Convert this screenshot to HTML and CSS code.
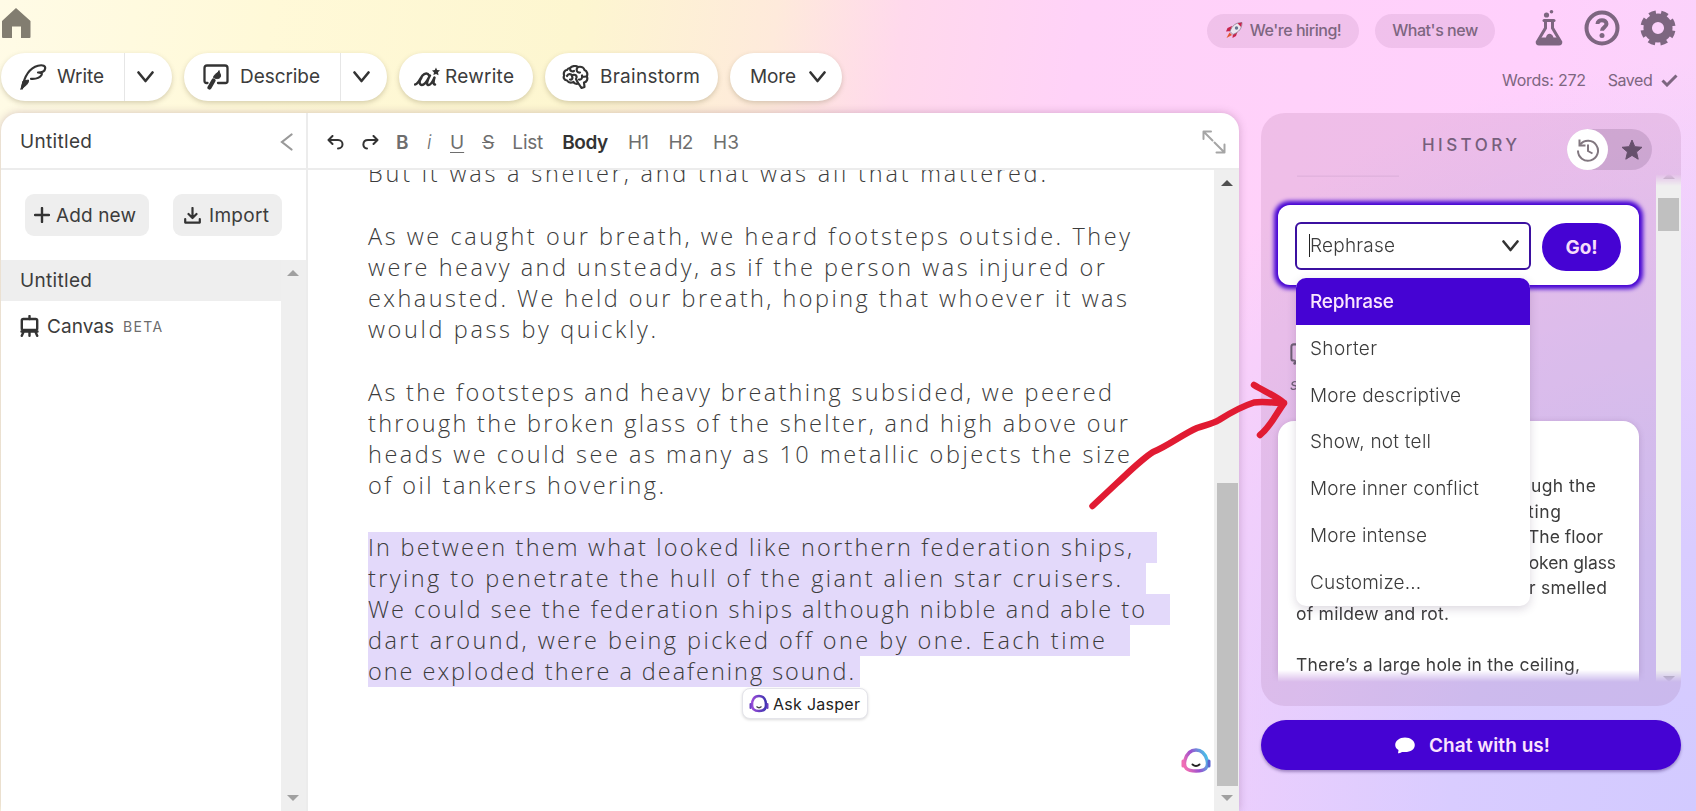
FILE: index.html
```html
<!DOCTYPE html>
<html lang="en">
<head>
  <meta charset="UTF-8">
  <meta name="viewport" content="width=device-width, initial-scale=1.0">
  <title>Untitled</title>
  <link rel="stylesheet" href="styles.css">
</head>
<body>
<header class="top">
  <div class="top-left">
    <a class="home">
      <svg width="30" height="31" viewBox="0 0 30 31"><path d="M15 0 L29.500 13 V29 Q29.500 30 28.500 30 H20 V18.500 H11 V30 H2 Q1 30 1 29 V13 Z" fill="#827d70"/></svg>
    </a>
    <nav class="tools">
      <div class="pill write">
        <svg width="27" height="26" viewBox="0 0 27 26" fill="none" stroke="#333" stroke-width="2.200" stroke-linecap="round" stroke-linejoin="round"><path d="M2 24.500 C4 14 9 4 18 1.700 C23 .5 26 2 25 5 C24.500 8 22 8.500 18 8.500 C21 8.500 22.500 9 21.500 11 C19 15 14 15 11 14.800"/><path d="M1 25 L3 17 L8.500 16 C9 19 6 22 1 25 Z" fill="#333" stroke-width="1"/></svg>
        <span class="label" data-w="47">Write</span>
        <span class="drop"><svg width="17" height="12" viewBox="0 0 17 12"><path d="M1.500 1.500 L8.500 10 L15.500 1.500"/></svg></span>
      </div>
      <div class="pill describe">
        <svg width="26" height="26" viewBox="0 0 26 26" fill="none" stroke="#333" stroke-width="2.300" stroke-linecap="round" stroke-linejoin="round"><path d="M4.500 19 H3.500 Q1.500 19 1.500 17 V4 Q1.500 1.500 4 1.500 H22 Q24.500 1.500 24.500 4 V17 Q24.500 19 22.500 19 H15"/><path d="M16 7 L17.500 11 C18 14 15.500 15 13 14.500 L10.500 13.500 C11 10 14 10 16 7 Z" fill="#333" stroke-width="1"/><path d="M10.500 16.500 L6.500 23.500" stroke-width="4.200"/></svg>
        <span class="label" data-w="80">Describe</span>
        <span class="drop"><svg width="17" height="12" viewBox="0 0 17 12"><path d="M1.500 1.500 L8.500 10 L15.500 1.500"/></svg></span>
      </div>
      <div class="pill rewrite">
        <svg width="27" height="20" viewBox="0 0 27 20" fill="none" stroke="#333" stroke-width="2.400" stroke-linecap="round" stroke-linejoin="round"><path d="M1 17.500 C4 17.500 5.500 12.500 8.500 8.500 C11 5.500 14 6 15 8.500 M7.500 10.500 C4.500 15 5.500 18 8 18 C11.500 18 13.500 13 16 8.500 C13.500 13 12 17.500 14 18 C17 18.500 19 14 20.500 10.500 C19 15 19.500 18 21 17.500"/><path d="M22 .5 l1.100 2.500 2.900.3 -2 2 .5 2.900 -2.500-1.300 -2.600 1.200 .6-2.700 -2-2 2.800-.4z" fill="#333" stroke="none"/></svg>
        <span class="label" data-w="69">Rewrite</span>
      </div>
      <div class="pill brain">
        <svg width="27" height="25" viewBox="0 0 27 25" fill="none" stroke="#333" stroke-width="2.200" stroke-linecap="round" stroke-linejoin="round"><path d="M8 3 C11 0 15 1 16 2 C20 1 22 3 22.500 5 C25 6 26 9 24.800 11.500 C26 14 25 17 22 17.500 L22.500 22 L19.500 23 L16.500 18.500 C14 19.500 12 18 11.500 17 C8 18.500 6 17 5 15.500 C2 15 1 12.500 2.200 10.500 C1 7.500 3 5 5 5 C5.500 4 6.500 3 8 3 Z"/><path d="M8 3.500 C8 6 10 7 12 6 M15.500 2.500 C13.500 5 15 8 18 7.500 M5 11 C6 8.500 9 8.500 10 10.500 C12 9 15 10 14.500 12.500 M8 14.500 C10 15 11 13.500 10 11 M17 14.500 C19 15 21 13 20 10.500 M20 12 L24 11.500 M14 14 L16 18"/></svg>
        <span class="label" data-w="100">Brainstorm</span>
      </div>
      <div class="pill more">
        <span class="label" data-w="46">More</span>
        <svg class="chev" width="17" height="12" viewBox="0 0 17 12"><path d="M1.500 1.500 L8.500 10 L15.500 1.500"/></svg>
      </div>
    </nav>
  </div>
  <div class="top-right">
    <div class="links">
      <a class="chip hiring">
        <svg width="18" height="17" viewBox="0 0 18 17"><path d="M7 4 L2.500 6 L1 9.500 L6 9 Z M12.500 9.500 L11 14 L7.500 16 L8 11 Z" fill="#c8234c"/><path d="M17 .5 C11 .5 7 3.500 5 9.500 L8 12.500 C14 10 17 6.500 17 .5 Z" fill="#ece6f0" stroke="#8a7d92" stroke-width=".8"/><path d="M17 .5 L12.500 1.300 L16 5 Z" fill="#c8234c"/><circle cx="11.500" cy="6" r="1.700" fill="#64748f"/><path d="M4.500 10.500 L7 13 L1.500 16 Z" fill="#e2572f"/></svg>
        <span data-w="92">We're hiring!</span>
      </a>
      <a class="chip"><span data-w="86">What's new</span></a>
      <div class="icons">
        <svg width="28" height="36" viewBox="0 0 28 36"><circle cx="11.500" cy="5" r="2.600" fill="#7d6680"/><circle cx="16.500" cy="1.800" r="1.800" fill="#7d6680"/><path d="M9 10.500 H19" stroke="#7d6680" stroke-width="3" stroke-linecap="round"/><path d="M10.500 11 V18 L2.200 32 Q2 34 4 34 H24 Q26 34 25.800 32 L17.500 18 V11" fill="none" stroke="#7d6680" stroke-width="3"/><path d="M5.500 27.500 H11 C11.500 23 17 22 18.500 27.500 H22.500 L25 33 H3 Z" fill="#7d6680"/></svg>
        <svg width="36" height="36" viewBox="0 0 36 36" fill="none" stroke="#7d6680"><circle cx="18" cy="18" r="15.500" stroke-width="4"/><path d="M13.500 14 C13.500 8.800 22.500 9 22.500 14 C22.500 17 18 17.200 18 20.800" stroke-width="4"/><circle cx="18" cy="25.600" r="2.500" fill="#7d6680" stroke="none"/></svg>
        <svg width="36" height="36" viewBox="0 0 36 36"><circle cx="18" cy="18" r="10.300" fill="none" stroke="#7d6680" stroke-width="8.500"/><circle cx="18" cy="18" r="15.300" fill="none" stroke="#7d6680" stroke-width="4.600" stroke-dasharray="6.700 5.317" stroke-dashoffset="-2.700"/></svg>
      </div>
    </div>
    <div class="status">
      <span data-w="84">Words: 272</span>
      <span class="saved" data-w="45">Saved</span>
      <svg width="17" height="13" viewBox="0 0 17 13"><path d="M1.500 6.500 L6 11 L15.500 1.500" fill="none" stroke="#7d6680" stroke-width="3"/></svg>
    </div>
  </div>
</header>

<main class="main">
  <div class="workspace">
    <aside class="sidebar">
      <div class="side-head">
        <span class="label" data-w="72">Untitled</span>
        <svg width="13" height="18" viewBox="0 0 13 18"><path d="M11.500 1.500 L2 9 L11.500 16.500" fill="none" stroke="#999" stroke-width="2.200" stroke-linecap="round"/></svg>
      </div>
      <div class="side-actions">
        <button class="btn add">
          <svg width="16" height="16" viewBox="0 0 16 16"><path d="M8 1 V15 M1 8 H15" stroke="#333" stroke-width="2.400" stroke-linecap="round"/></svg>
          <span data-w="80">Add new</span>
        </button>
        <button class="btn import">
          <svg width="17" height="17" viewBox="0 0 17 17" fill="none" stroke="#333" stroke-width="2.200" stroke-linecap="round" stroke-linejoin="round"><path d="M8.500 1 V10 M4.500 7 L8.500 11 L12.500 7 M1.200 12 V15.600 H15.800 V12"/></svg>
          <span data-w="60">Import</span>
        </button>
      </div>
      <div class="docs">
        <div class="doc-list">
          <div class="doc active"><span data-w="72">Untitled</span></div>
          <div class="doc canvas">
            <svg width="19" height="22" viewBox="0 0 19 22" fill="none" stroke="#333" stroke-width="2.400" stroke-linecap="round"><rect x="1.800" y="4" width="15.400" height="11" rx="1.500"/><path d="M9.500 1 V4 M1.500 16.500 H17.500 M3.500 17 L1.800 20.800 M15.500 17 L17.200 20.800 M9.500 17 V20.800"/></svg>
            <span data-w="67">Canvas</span>
            <span class="beta" data-w="39">BETA</span>
          </div>
        </div>
        <div class="scroll side-scroll"><i class="up"></i><i class="down"></i></div>
      </div>
    </aside>

    <section class="editor">
      <div class="format">
        <svg width="17" height="15" viewBox="0 0 17 15"><path d="M5.500 1 L1.500 5 L5.500 9 M2 5 H11 C17 5 17 13.500 11 13.500"/></svg>
        <svg class="redo" width="17" height="15" viewBox="0 0 17 15"><path d="M11.500 1 L15.500 5 L11.500 9 M15 5 H6 C0 5 0 13.500 5 13.500"/></svg>
        <b class="f-b">B</b><i class="f-i">i</i><u class="f-u">U</u><s class="f-s">S</s>
        <span class="f-list" data-w="31">List</span>
        <span class="f-body" data-w="46">Body</span>
        <span class="f-h" data-w="21">H1</span>
        <span class="f-h" data-w="25">H2</span>
        <span class="f-h" data-w="26">H3</span>
        <svg class="expand" width="24" height="24" viewBox="0 0 24 24"><path d="M1.500 9 V1.500 H9 M1.500 1.500 L10.500 10.500 M12.500 12.500 L22 22 M22.500 14.500 V22.500 H14.500"/></svg>
      </div>
      <div class="page-wrap">
        <article class="page">
          <p>
            <span class="line" data-w="678">But it was a shelter, and that was all that mattered.</span>
          </p>
          <p>
            <span class="line" data-w="762">As we caught our breath, we heard footsteps outside. They</span>
            <span class="line" data-w="737">were heavy and unsteady, as if the person was injured or</span>
            <span class="line" data-w="759">exhausted. We held our breath, hoping that whoever it was</span>
            <span class="line" data-w="288">would pass by quickly.</span>
          </p>
          <p>
            <span class="line" data-w="744">As the footsteps and heavy breathing subsided, we peered</span>
            <span class="line" data-w="760">through the broken glass of the shelter, and high above our</span>
            <span class="line" data-w="762">heads we could see as many as 10 metallic objects the size</span>
            <span class="line" data-w="296">of oil tankers hovering.</span>
          </p>
          <p class="selected">
            <span class="line" data-w="764">In between them what looked like northern federation ships,</span>
            <span class="line" data-w="753">trying to penetrate the hull of the giant alien star cruisers.</span>
            <span class="line" data-w="777">We could see the federation ships although nibble and able to</span>
            <span class="line" data-w="737">dart around, were being picked off one by one. Each time</span>
            <span class="line last" data-w="486">one exploded there a deafening sound.</span>
          </p>
          <button class="ask">
            <svg width="20" height="19" viewBox="0 0 20 19" fill="none"><defs><linearGradient id="j1"><stop offset="0" stop-color="#9a4bd8"/><stop offset="1" stop-color="#3f35b0"/></linearGradient></defs><path d="M10 2 C5 2 3 6 3 11 C3 15 5 17 10 17 C15 17 17 15 17 11 C17 6 15 2 10 2 Z" stroke="url(#j1)" stroke-width="2.600"/><path d="M1.500 10 V14 M18.500 10 V14" stroke="#6b3fc4" stroke-width="2" stroke-linecap="round"/><path d="M7.500 12.500 Q10 15 12.500 12.500" stroke="#444" stroke-width="1.200"/></svg>
            <span data-w="87">Ask Jasper</span>
          </button>
          <svg class="jasper" width="30" height="25" viewBox="0 0 30 25" fill="none"><defs><linearGradient id="j2" x1="0" y1=".7" x2="1" y2=".3"><stop offset="0" stop-color="#ef6db5"/><stop offset=".45" stop-color="#9a50cf"/><stop offset="1" stop-color="#45c4e8"/></linearGradient></defs><path d="M15 2 C8 2 5.500 7 4 12 C2 20 6 23 15 23 C24 23 28 20 26 12 C24.500 7 22 2 15 2 Z" stroke="url(#j2)" stroke-width="3.400"/><path d="M2 13 V18" stroke="#ef6db5" stroke-width="3" stroke-linecap="round"/><path d="M28 13 V18" stroke="#5a62d0" stroke-width="3" stroke-linecap="round"/><path d="M11.500 16.500 Q15 19.500 18.500 16.500" stroke="#222" stroke-width="2" stroke-linecap="round"/></svg>
        </article>
        <div class="scroll page-scroll"><i class="up"></i><b class="thumb"></b><i class="down"></i></div>
      </div>
    </section>
  </div>

  <aside class="right">
    <section class="history">
      <div class="history-head">
        <h2><span data-w="95">HISTORY</span></h2>
        <div class="toggle">
          <span class="knob"><svg width="24" height="24" viewBox="0 0 24 24" fill="none" stroke="#81777f" stroke-width="2"><path d="M4.200 6.500 A10 10 0 1 1 2 12.500"/><path d="M3.500 1.500 V7.500 H9.500" /><path d="M12 6.500 V13 L16.500 15.500"/></svg></span>
          <svg width="22" height="22" viewBox="0 0 22 22"><path d="M11 1 L13.800 7.700 L21 8.300 L15.500 13 L17.200 20.200 L11 16.400 L4.800 20.200 L6.500 13 L1 8.300 L8.200 7.700 Z" fill="#66506c" stroke="#66506c" stroke-linejoin="round"/></svg>
        </div>
      </div>
      <div class="history-scroll">
        <div class="history-list">
          <hr>
          <div class="composer">
            <div class="select">
              <span data-w="85">Rephrase</span>
              <svg class="chev" width="17" height="12" viewBox="0 0 17 12"><path d="M1.500 1.500 L8.500 10 L15.500 1.500"/></svg>
              <ul class="menu">
                <li class="on"><span data-w="84">Rephrase</span></li>
                <li><span data-w="67">Shorter</span></li>
                <li><span data-w="151">More descriptive</span></li>
                <li><span data-w="121">Show, not tell</span></li>
                <li><span data-w="169">More inner conflict</span></li>
                <li><span data-w="117">More intense</span></li>
                <li><span data-w="111">Customize...</span></li>
              </ul>
            </div>
            <button class="go"><span data-w="32">Go!</span></button>
          </div>
          <div class="meta">
            <svg width="24" height="24" viewBox="0 0 26 26" fill="none" stroke="#6f5f75" stroke-width="2.200" stroke-linecap="round"><path d="M4.500 19 H3.500 Q1.500 19 1.500 17 V4 Q1.500 1.500 4 1.500 H22 Q24.500 1.500 24.500 4 V17 Q24.500 19 22.500 19 H15"/><path d="M6.500 20 L5 22" stroke-width="3"/></svg>
            <em>s</em>
          </div>
          <div class="card">
            <div class="tail"><span data-w="65">ugh the</span></div>
            <div class="tail t2"><span data-w="33">ting</span></div>
            <div class="tail t3"><span data-w="75">The floor</span></div>
            <div class="tail t4"><span data-w="104">broken glass</span></div>
            <div class="tail t5"><span data-w="78">r smelled</span></div>
            <div><span data-w="153">of mildew and rot.</span></div>
            <div class="gap"><span data-w="284">There’s a large hole in the ceiling,</span></div>
          </div>
        </div>
        <div class="scroll history-bar"><i class="up"></i><b class="thumb"></b><i class="down"></i></div>
      </div>
    </section>
    <button class="chat">
      <svg width="20" height="17" viewBox="0 0 20 17"><path d="M10 .5 C15.500 .5 19.800 3.800 19.800 8 C19.800 12.500 15.500 15 10 15 C8.500 15 7.500 14.800 6.500 15.200 C5.500 16 4 16.500 3 16.200 L3.500 13 C1.500 12 .2 10 .2 8 C.2 3.800 4.500 .5 10 .5 Z" fill="#fff"/></svg>
      <span data-w="121">Chat with us!</span>
    </button>
  </aside>
</main>

<!-- hand drawn pointer over the menu -->
<svg class="arrow" width="1696" height="811" viewBox="0 0 1696 811"><path d="M1092.500 506 L1117 483 C1130 471 1142 459 1153 452 C1168 446 1183 434 1197 428 C1205 425 1212 424 1219 420 C1230 413 1243 406 1254 402.500 C1264 401 1274 403 1284 403 M1254 385 C1264 391 1276 396 1284 403 C1276 414 1271 426 1260 435"/></svg>
<script src="script.js"></script>
</body>
</html>
```
FILE: styles.css
```css
* {
  box-sizing: border-box;
}
body {
  margin: 0;
  width: 1696px;
  height: 811px;
  overflow: hidden;
  font-family: Inter, "Liberation Sans", sans-serif;
  font-size: 19px;
  color: #3c3c3c;
  background:
    radial-gradient(ellipse 700px 750px at 1696px 811px, #d2caff 0%, #d9ccff 35%, rgba(240, 208, 248, 0) 100%),
    linear-gradient(98deg, #fffbe6 0%, #fff9d8 15%, #fdf6d0 32%, #feeadb 43%, #ffd9ec 50%, #ffd2f8 60%, #ffd0fc 85%, #f8d4fa 100%);
}
button {
  border: 0;
  padding: 0;
  font: inherit;
  color: inherit;
}
svg {
  flex: none;
}
span {
  white-space: nowrap;
}

/* Top bar */
.top {
  height: 113px;
  display: flex;
  justify-content: space-between;
}
.home {
  display: block;
  height: 45px;
  padding: 8px 0 0 1px;
}
.tools {
  display: flex;
  gap: 12px;
  padding: 8px 0 0 1px;
}
.pill {
  height: 48px;
  display: flex;
  align-items: center;
  background: #fff;
  border-radius: 24px;
  box-shadow: 0 2px 5px rgba(90, 80, 40, .25);
}
.pill .label {
  padding-bottom: 1px;
}
.write {
  width: 171px;
  padding-left: 19px;
}
.write .label {
  margin-left: 10px;
  width: 67px;
}
.describe {
  width: 203px;
  padding-left: 19px;
}
.describe .label {
  margin-left: 11px;
  width: 100px;
}
.rewrite {
  width: 134px;
  padding-left: 15px;
}
.rewrite .label {
  margin-left: 4px;
}
.brain {
  width: 173px;
  padding-left: 17px;
}
.brain .label {
  margin-left: 11px;
}
.more {
  width: 112px;
  padding-left: 20px;
  gap: 13px;
}
.drop {
  flex: 1;
  height: 48px;
  display: flex;
  align-items: center;
  padding-left: 12px;
  border-left: 1px solid #e6e6e6;
}
.drop path, .chev path {
  fill: none;
  stroke: #333;
  stroke-width: 2.6;
  stroke-linecap: round;
  stroke-linejoin: round;
}
.top-right {
  width: 489px;
  color: #7d6680;
}
.links {
  display: flex;
  padding-top: 14px;
  gap: 16px;
  height: 62px;
}
.chip {
  height: 34px;
  width: 120px;
  display: flex;
  align-items: center;
  justify-content: center;
  gap: 7px;
  padding-bottom: 2px;
  font-size: 16px;
  font-weight: 500;
  background: rgba(120, 60, 120, .11);
  border-radius: 17px;
}
.hiring {
  width: 152px;
}
.icons {
  display: flex;
  margin: -4px 0 0 24px;
  gap: 20.500px;
}
.status {
  display: flex;
  align-items: center;
  padding: 8px 0 0 295px;
  font-size: 16px;
}
.saved {
  margin: 0 9px 0 22px;
}

.main {
  display: flex;
  height: 698px;
}

/* Document list */
.workspace {
  width: 1238px;
  margin-left: 1px;
  display: flex;
  background: #fff;
  border-radius: 18px 18px 0 0;
  box-shadow: 0 0 9px rgba(100, 50, 90, .28);
}
.sidebar {
  width: 307px;
  border-right: 2px solid #ececec;
  display: flex;
  flex-direction: column;
}
.side-head {
  height: 57px;
  display: flex;
  align-items: center;
  justify-content: space-between;
  padding: 2px 13px 0 19px;
  border-bottom: 2px solid #ececec;
}
.side-actions {
  height: 90px;
  display: flex;
  gap: 24px;
  padding: 24px 0 0 24px;
}
.btn {
  height: 42px;
  display: flex;
  align-items: center;
  background: #eee;
  border-radius: 9px;
}
.add {
  width: 124px;
  padding-left: 9px;
  gap: 6px;
}
.import {
  width: 109px;
  padding-left: 11px;
  gap: 8px;
}
.docs {
  flex: 1;
  display: flex;
}
.doc-list {
  flex: 1;
}
.doc {
  height: 41px;
  display: flex;
  align-items: center;
  padding-left: 19px;
}
.active {
  background: #eee;
}
.canvas {
  height: 50px;
  gap: 8px;
}
.beta {
  margin-left: 1px;
  font-size: 14px;
  color: #6c6c6c;
  padding-top: 1px;
}

/* Fake scrollbars */
.scroll {
  width: 25px;
  background: #efefef;
  display: flex;
  flex-direction: column;
  align-items: center;
}
.side-scroll {
  padding-right: 1px;
}
.up, .down {
  border: 6px solid transparent;
  border-top: 0;
  border-bottom: 6px solid #a0a0a0;
  margin-top: 10px;
}
.down {
  border-bottom: 0;
  border-top: 6px solid #a0a0a0;
  margin: auto 0 10px;
}
.thumb {
  width: 21px;
  background: #c0c0c0;
}

/* Editor */
.editor {
  flex: 1;
  display: flex;
  flex-direction: column;
}
.format {
  height: 57px;
  display: flex;
  align-items: center;
  padding: 3px 13px 0 19px;
  border-bottom: 2px solid #ececec;
  color: #6e6e6e;
}
.format svg path {
  fill: none;
  stroke: #333;
  stroke-width: 2;
  stroke-linecap: round;
  stroke-linejoin: round;
}
.redo {
  margin-left: 18px;
}
.f-b {
  width: 12px;
  margin-left: 17px;
  font-weight: 600;
}
.f-i {
  width: 7px;
  margin-left: 19px;
  font-weight: 300;
}
.f-u {
  margin-left: 16px;
  text-underline-offset: 3px;
}
.f-s {
  margin-left: 18px;
}
.f-list {
  margin-left: 18px;
}
.f-body {
  margin-left: 19px;
  color: #333;
  font-weight: 600;
}
.f-h {
  margin-left: 20.300px;
}
.format .expand {
  margin-left: auto;
}
.format .expand path {
  stroke: #a5a5a5;
}
.page-wrap {
  flex: 1;
  display: flex;
}
.page {
  flex: 1;
  height: 641px;
  overflow: hidden;
  position: relative;
  padding-left: 60px;
  font-family: "Open Sans", "Noto Sans", sans-serif;
  font-weight: 300;
  font-size: 23.500px;
  line-height: 31px;
}
.page p {
  margin: 0 0 31.800px;
}
.page p:first-child {
  margin-top: -12px;
}
.line {
  display: block;
  width: max-content;
}
.selected .line {
  background: #e3d9fa;
  padding-right: 23px;
}
.selected .last {
  padding-right: 4px;
}
.ask {
  position: absolute;
  left: 434px;
  top: 518px;
  width: 126px;
  height: 31px;
  display: flex;
  align-items: center;
  gap: 4px;
  padding-left: 6px;
  font: 400 16px Inter, sans-serif;
  color: #222;
  background: #fff;
  border: 1px solid #e4e4ea;
  border-radius: 8px;
  box-shadow: 0 1px 3px rgba(0, 0, 0, .15);
}
.jasper {
  position: absolute;
  right: 3px;
  top: 578px;
}
.page-scroll {
  padding-left: 1px;
}
.page-scroll .up {
  border-bottom-color: #505050;
}
.page-scroll .thumb {
  height: 303px;
  margin-top: 297px;
}

/* History panel */
.right {
  width: 420px;
  margin-left: 22px;
}
.history {
  height: 593px;
  background: rgba(120, 60, 110, .12);
  border-radius: 24px;
}
.history-head {
  height: 57px;
  display: flex;
}
.history-head h2 {
  width: 306px;
  margin: 0;
  padding: 22px 0 0 161px;
  font-size: 17px;
  line-height: 20px;
  font-weight: 500;
  color: #765f7b;
}
.toggle {
  width: 85px;
  height: 41px;
  margin-top: 16px;
  display: flex;
  align-items: center;
  gap: 13px;
  background: rgba(90, 60, 100, .18);
  border-radius: 21px;
}
.knob {
  width: 41px;
  height: 41px;
  display: flex;
  align-items: center;
  justify-content: center;
  background: #fff;
  border-radius: 50%;
}
.history-scroll {
  height: 512px;
  display: flex;
  -webkit-mask-image: linear-gradient(#0000 4px, #000 16px, #000 500px, #0000 512px);
  mask-image: linear-gradient(#0000 4px, #000 16px, #000 500px, #0000 512px);
}
.history-list {
  width: 395px;
  height: 512px;
  padding: 0 17px;
}
.history-list hr {
  width: 102px;
  height: 2px;
  margin: 5px 0 28px 19px;
  border: 0;
  background: #b58fbd;
}
.composer {
  height: 80px;
  display: flex;
  gap: 11px;
  padding: 17px;
  background: #fff;
  border-radius: 12px;
  box-shadow: 0 0 4px 3.500px #4503d3;
}
.select {
  position: relative;
  width: 236px;
  height: 48px;
  display: flex;
  align-items: center;
  justify-content: space-between;
  padding: 0 10px 0 12px;
  border: 2px solid #3b10a0;
  border-radius: 6px;
  font-weight: 300;
}
.select > span {
  margin-top: -2px;
  border-left: 1px solid #222;
}
.menu {
  position: absolute;
  z-index: 2;
  left: -1px;
  top: 54px;
  width: 234px;
  height: 328px;
  margin: 0;
  padding: 0;
  list-style: none;
  overflow: hidden;
  background: #fff;
  border-radius: 10px;
  box-shadow: 0 3px 10px rgba(60, 40, 80, .18);
}
.menu li {
  height: 46.800px;
  line-height: 47px;
  padding-left: 14px;
}
.menu .on {
  background: #4503d3;
  color: #fbe6fd;
  font-weight: 500;
}
.go {
  width: 79px;
  height: 48px;
  margin-top: 1px;
  background: #4503d3;
  color: #f6dcfa;
  border-radius: 24px;
  font-weight: 700;
}
.meta {
  height: 136px;
  padding: 58px 0 0 12px;
  font-size: 16px;
  color: #6f5f75;
}
.meta svg, .meta em {
  display: block;
}
.meta em {
  margin-top: 7px;
}
.card {
  height: 300px;
  padding: 52px 17px 0 18px;
  background: #fff;
  border-radius: 16px;
  box-shadow: 0 1px 6px rgba(80, 40, 90, .2);
  font-size: 17.500px;
  line-height: 25.500px;
}
.tail {
  padding-left: 235px;
}
.t2 {
  padding-left: 232px;
}
.t3 {
  padding-left: 232px;
}
.t4 {
  padding-left: 216px;
}
.t5 {
  padding-left: 233px;
}
.gap {
  margin-top: 26px;
}
.history-bar {
  height: 512px;
}
.history-bar .up {
  margin-top: 3px;
}
.history-bar .thumb {
  height: 33px;
  margin-top: 19px;
}
.history-bar .down {
  margin-bottom: 0;
}
.chat {
  width: 420px;
  height: 50px;
  margin-top: 14px;
  padding-left: 3px;
  display: flex;
  align-items: center;
  justify-content: center;
  gap: 14px;
  background: #4503d3;
  color: #fbe3fd;
  border-radius: 25px;
  font-weight: 600;
  box-shadow: 0 2px 3px rgba(60, 30, 110, .4);
}

.arrow {
  position: absolute;
  left: 0;
  top: 0;
  z-index: 5;
}
.arrow path {
  fill: none;
  stroke: #e11b32;
  stroke-width: 6.5;
  stroke-linecap: round;
  stroke-linejoin: round;
}
```
FILE: script.js
```js
// track every label out to the width given in data-w
document.querySelectorAll('[data-w]').forEach(function (el) {
  const range = document.createRange();
  range.selectNodeContents(el);
  const natural = range.getBoundingClientRect().width;
  const gaps = el.textContent.length - 1;
  const spacing = (Number(el.dataset.w) - natural) / gaps;
  el.style.letterSpacing = spacing.toFixed(3) + 'px';
});
```
